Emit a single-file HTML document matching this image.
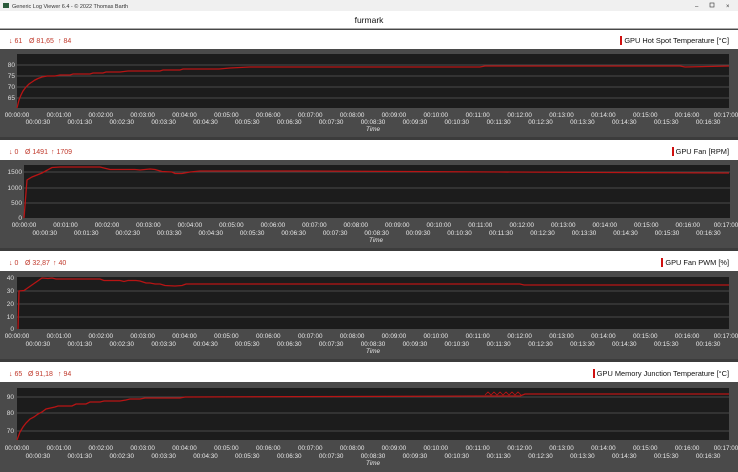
<!DOCTYPE html>
<html><head><meta charset="utf-8"><style>
html,body{margin:0;padding:0;width:738px;height:472px;overflow:hidden;background:#3c3c3c;font-family:"Liberation Sans",sans-serif}
svg{display:block;position:absolute;left:0;top:0}
.lg{position:absolute;right:9px;font-size:7.4px;line-height:9px;color:#111;border-left:2px solid #d01010;padding-left:2px;white-space:nowrap}
</style></head><body>
<svg width="738" height="472" viewBox="0 0 738 472" xmlns="http://www.w3.org/2000/svg" font-family="Liberation Sans, sans-serif">
<rect x="0" y="0" width="738" height="472" fill="#3c3c3c"/>
<rect x="0" y="0" width="738" height="11" fill="#f0f0f0"/>
<rect x="3" y="3" width="6" height="5" fill="#2a5a3a"/>
<text x="12" y="8" font-size="5.5" fill="#333">Generic Log Viewer 6.4 - © 2022 Thomas Barth</text>
<text x="695" y="8" font-size="6" fill="#333">–</text>
<rect x="710" y="3" width="4" height="4" fill="none" stroke="#333" stroke-width="0.6"/>
<text x="726" y="8" font-size="6" fill="#333">×</text>
<rect x="0" y="11" width="738" height="18" fill="#fff"/>
<text x="369" y="23" font-size="8.5" text-anchor="middle" fill="#111">furmark</text>
<rect x="0" y="28.5" width="738" height="1" fill="#555"/>

<!-- Panel 1 -->
<rect x="0" y="30" width="738" height="19" fill="#fff"/>
<rect x="0" y="49" width="738" height="88" fill="#4a4a4a"/>
<text x="9" y="43" font-size="7" fill="#c0392b">↓ 61 <tspan x="29">Ø 81,65</tspan><tspan x="58">↑ 84</tspan></text>
<rect x="17" y="54" width="712" height="54" fill="#1c1c1c"/>
<g stroke="#5a5a5a" stroke-width="0.7"><line x1="17" x2="729" y1="65" y2="65"/><line x1="17" x2="729" y1="76" y2="76"/><line x1="17" x2="729" y1="87" y2="87"/><line x1="17" x2="729" y1="98" y2="98"/></g>
<g font-size="6.5" fill="#ddd" text-anchor="end"><text x="15" y="67">80</text><text x="15" y="78">75</text><text x="15" y="89">70</text><text x="15" y="100">65</text></g>
<polyline fill="none" stroke="#b81414" stroke-width="1.3" points="17,108 19,100 21,95 23,91 26,87 29,84 32,82 35,80 38,78.5 42,77 47,76 55,76 60,75 70,75 73,74 90,74 93,73 103,73 106,72 120,72 128,71 160,71 163,70 180,70 183,69 219,69 230,68 250,67 300,67 400,67 480,67 485,66 520,66 680,66 685,67 729,66"/>
<g font-size="6.3" fill="#e8e8e8" text-anchor="middle">
<text y="117"><tspan x="17">00:00:00</tspan><tspan x="58.9">00:01:00</tspan><tspan x="100.8">00:02:00</tspan><tspan x="142.6">00:03:00</tspan><tspan x="184.5">00:04:00</tspan><tspan x="226.4">00:05:00</tspan><tspan x="268.3">00:06:00</tspan><tspan x="310.2">00:07:00</tspan><tspan x="352.1">00:08:00</tspan><tspan x="393.9">00:09:00</tspan><tspan x="435.8">00:10:00</tspan><tspan x="477.7">00:11:00</tspan><tspan x="519.6">00:12:00</tspan><tspan x="561.5">00:13:00</tspan><tspan x="603.4">00:14:00</tspan><tspan x="645.2">00:15:00</tspan><tspan x="687.1">00:16:00</tspan><tspan x="726">00:17:00</tspan></text>
<text y="124"><tspan x="37.9">00:00:30</tspan><tspan x="79.8">00:01:30</tspan><tspan x="121.7">00:02:30</tspan><tspan x="163.6">00:03:30</tspan><tspan x="205.5">00:04:30</tspan><tspan x="247.3">00:05:30</tspan><tspan x="289.2">00:06:30</tspan><tspan x="331.1">00:07:30</tspan><tspan x="373">00:08:30</tspan><tspan x="414.9">00:09:30</tspan><tspan x="456.8">00:10:30</tspan><tspan x="498.6">00:11:30</tspan><tspan x="540.5">00:12:30</tspan><tspan x="582.4">00:13:30</tspan><tspan x="624.3">00:14:30</tspan><tspan x="666.2">00:15:30</tspan><tspan x="708.1">00:16:30</tspan></text>
<text x="373" y="131" font-style="italic">Time</text></g>

<!-- Panel 2 -->
<rect x="0" y="140" width="738" height="20" fill="#fff"/>
<rect x="0" y="160" width="738" height="88" fill="#4a4a4a"/>
<text x="9" y="154" font-size="7" fill="#c0392b">↓ 0 <tspan x="25">Ø 1491</tspan><tspan x="51">↑ 1709</tspan></text>
<rect x="24" y="165" width="706" height="53" fill="#1c1c1c"/>
<g stroke="#5a5a5a" stroke-width="0.7"><line x1="24" x2="730" y1="172" y2="172"/><line x1="24" x2="730" y1="188" y2="188"/><line x1="24" x2="730" y1="203" y2="203"/></g>
<g font-size="6.5" fill="#ddd" text-anchor="end"><text x="22" y="174">1500</text><text x="22" y="190">1000</text><text x="22" y="205">500</text><text x="22" y="220">0</text></g>
<polyline fill="none" stroke="#b81414" stroke-width="1.3" points="24,218 27,180 32,177 42,173 52,167.5 60,167 100,167 106,168.5 110,169.5 135,169.5 140,170 150,169 155,169.5 162,171.5 172,172 175,173.5 182,173.5 190,172 200,171 300,171 500,172 729,173"/>
<g font-size="6.3" fill="#e8e8e8" text-anchor="middle">
<text y="227"><tspan x="24">00:00:00</tspan><tspan x="65.5">00:01:00</tspan><tspan x="107">00:02:00</tspan><tspan x="148.4">00:03:00</tspan><tspan x="189.9">00:04:00</tspan><tspan x="231.4">00:05:00</tspan><tspan x="272.9">00:06:00</tspan><tspan x="314.4">00:07:00</tspan><tspan x="355.8">00:08:00</tspan><tspan x="397.3">00:09:00</tspan><tspan x="438.8">00:10:00</tspan><tspan x="480.3">00:11:00</tspan><tspan x="521.8">00:12:00</tspan><tspan x="563.3">00:13:00</tspan><tspan x="604.7">00:14:00</tspan><tspan x="646.2">00:15:00</tspan><tspan x="687.7">00:16:00</tspan><tspan x="726">00:17:00</tspan></text>
<text y="235"><tspan x="44.7">00:00:30</tspan><tspan x="86.2">00:01:30</tspan><tspan x="127.7">00:02:30</tspan><tspan x="169.2">00:03:30</tspan><tspan x="210.7">00:04:30</tspan><tspan x="252.1">00:05:30</tspan><tspan x="293.6">00:06:30</tspan><tspan x="335.1">00:07:30</tspan><tspan x="376.6">00:08:30</tspan><tspan x="418.1">00:09:30</tspan><tspan x="459.5">00:10:30</tspan><tspan x="501">00:11:30</tspan><tspan x="542.5">00:12:30</tspan><tspan x="584">00:13:30</tspan><tspan x="625.5">00:14:30</tspan><tspan x="667">00:15:30</tspan><tspan x="708.4">00:16:30</tspan></text>
<text x="376" y="242" font-style="italic">Time</text></g>

<!-- Panel 3 -->
<rect x="0" y="251" width="738" height="20" fill="#fff"/>
<rect x="0" y="271" width="738" height="88" fill="#4a4a4a"/>
<text x="9" y="265" font-size="7" fill="#c0392b">↓ 0 <tspan x="25">Ø 32,87</tspan><tspan x="53">↑ 40</tspan></text>
<rect x="17" y="277" width="712" height="52" fill="#1c1c1c"/>
<g stroke="#5a5a5a" stroke-width="0.7"><line x1="17" x2="729" y1="291" y2="291"/><line x1="17" x2="729" y1="304" y2="304"/><line x1="17" x2="729" y1="317" y2="317"/></g>
<g font-size="6.5" fill="#ddd" text-anchor="end"><text x="14" y="280">40</text><text x="14" y="293">30</text><text x="14" y="306">20</text><text x="14" y="319">10</text><text x="14" y="331">0</text></g>
<polyline fill="none" stroke="#b81414" stroke-width="1.3" points="18,329 19,291 24,290.5 42,278 48,278.5 52,278 56,279 64,279 100,279 104,280.5 120,280.5 124,281.5 128,280.5 136,280.5 140,281 146,283 150,283 155,284 160,284 165,285.5 175,286 182,285.5 186,284 192,284 300,284 520,284 524,285 729,285"/>
<g font-size="6.3" fill="#e8e8e8" text-anchor="middle">
<text y="338"><tspan x="17">00:00:00</tspan><tspan x="58.9">00:01:00</tspan><tspan x="100.8">00:02:00</tspan><tspan x="142.6">00:03:00</tspan><tspan x="184.5">00:04:00</tspan><tspan x="226.4">00:05:00</tspan><tspan x="268.3">00:06:00</tspan><tspan x="310.2">00:07:00</tspan><tspan x="352.1">00:08:00</tspan><tspan x="393.9">00:09:00</tspan><tspan x="435.8">00:10:00</tspan><tspan x="477.7">00:11:00</tspan><tspan x="519.6">00:12:00</tspan><tspan x="561.5">00:13:00</tspan><tspan x="603.4">00:14:00</tspan><tspan x="645.2">00:15:00</tspan><tspan x="687.1">00:16:00</tspan><tspan x="726">00:17:00</tspan></text>
<text y="346"><tspan x="37.9">00:00:30</tspan><tspan x="79.8">00:01:30</tspan><tspan x="121.7">00:02:30</tspan><tspan x="163.6">00:03:30</tspan><tspan x="205.5">00:04:30</tspan><tspan x="247.3">00:05:30</tspan><tspan x="289.2">00:06:30</tspan><tspan x="331.1">00:07:30</tspan><tspan x="373">00:08:30</tspan><tspan x="414.9">00:09:30</tspan><tspan x="456.8">00:10:30</tspan><tspan x="498.6">00:11:30</tspan><tspan x="540.5">00:12:30</tspan><tspan x="582.4">00:13:30</tspan><tspan x="624.3">00:14:30</tspan><tspan x="666.2">00:15:30</tspan><tspan x="708.1">00:16:30</tspan></text>
<text x="373" y="353" font-style="italic">Time</text></g>

<!-- Panel 4 -->
<rect x="0" y="362" width="738" height="20" fill="#fff"/>
<rect x="0" y="382" width="738" height="90" fill="#4a4a4a"/>
<text x="9" y="376" font-size="7" fill="#c0392b">↓ 65 <tspan x="28">Ø 91,18</tspan><tspan x="58">↑ 94</tspan></text>
<rect x="17" y="388" width="712" height="52" fill="#1c1c1c"/>
<g stroke="#5a5a5a" stroke-width="0.7"><line x1="17" x2="729" y1="397" y2="397"/><line x1="17" x2="729" y1="413" y2="413"/><line x1="17" x2="729" y1="431" y2="431"/></g>
<g font-size="6.5" fill="#ddd" text-anchor="end"><text x="14" y="399">90</text><text x="14" y="415">80</text><text x="14" y="433">70</text></g>
<polyline fill="none" stroke="#b81414" stroke-width="1.3" points="17,440 20,432 23,427 26,423 30,419 34,417 38,414 42,412 46,409 55,407 58,406 72,406 76,404 86,404 90,402 100,402 104,401 120,401 126,400 130,399 140,399 145,398 180,398 185,397 500,396 520,396 525,394 729,394"/>
<polyline fill="none" stroke="#b81414" stroke-width="0.8" points="485,395 488,392 491,395 494,392 497,395 500,392 503,395 506,392 509,395 512,392 515,395 518,392 521,395"/>
<g font-size="6.3" fill="#e8e8e8" text-anchor="middle">
<text y="450"><tspan x="17">00:00:00</tspan><tspan x="58.9">00:01:00</tspan><tspan x="100.8">00:02:00</tspan><tspan x="142.6">00:03:00</tspan><tspan x="184.5">00:04:00</tspan><tspan x="226.4">00:05:00</tspan><tspan x="268.3">00:06:00</tspan><tspan x="310.2">00:07:00</tspan><tspan x="352.1">00:08:00</tspan><tspan x="393.9">00:09:00</tspan><tspan x="435.8">00:10:00</tspan><tspan x="477.7">00:11:00</tspan><tspan x="519.6">00:12:00</tspan><tspan x="561.5">00:13:00</tspan><tspan x="603.4">00:14:00</tspan><tspan x="645.2">00:15:00</tspan><tspan x="687.1">00:16:00</tspan><tspan x="726">00:17:00</tspan></text>
<text y="458"><tspan x="37.9">00:00:30</tspan><tspan x="79.8">00:01:30</tspan><tspan x="121.7">00:02:30</tspan><tspan x="163.6">00:03:30</tspan><tspan x="205.5">00:04:30</tspan><tspan x="247.3">00:05:30</tspan><tspan x="289.2">00:06:30</tspan><tspan x="331.1">00:07:30</tspan><tspan x="373">00:08:30</tspan><tspan x="414.9">00:09:30</tspan><tspan x="456.8">00:10:30</tspan><tspan x="498.6">00:11:30</tspan><tspan x="540.5">00:12:30</tspan><tspan x="582.4">00:13:30</tspan><tspan x="624.3">00:14:30</tspan><tspan x="666.2">00:15:30</tspan><tspan x="708.1">00:16:30</tspan></text>
<text x="373" y="465" font-style="italic">Time</text></g>
</svg>
<div class="lg" style="top:36px">GPU Hot Spot Temperature [°C]</div>
<div class="lg" style="top:147px">GPU Fan [RPM]</div>
<div class="lg" style="top:258px">GPU Fan PWM [%]</div>
<div class="lg" style="top:369px">GPU Memory Junction Temperature [°C]</div>
</body></html>
